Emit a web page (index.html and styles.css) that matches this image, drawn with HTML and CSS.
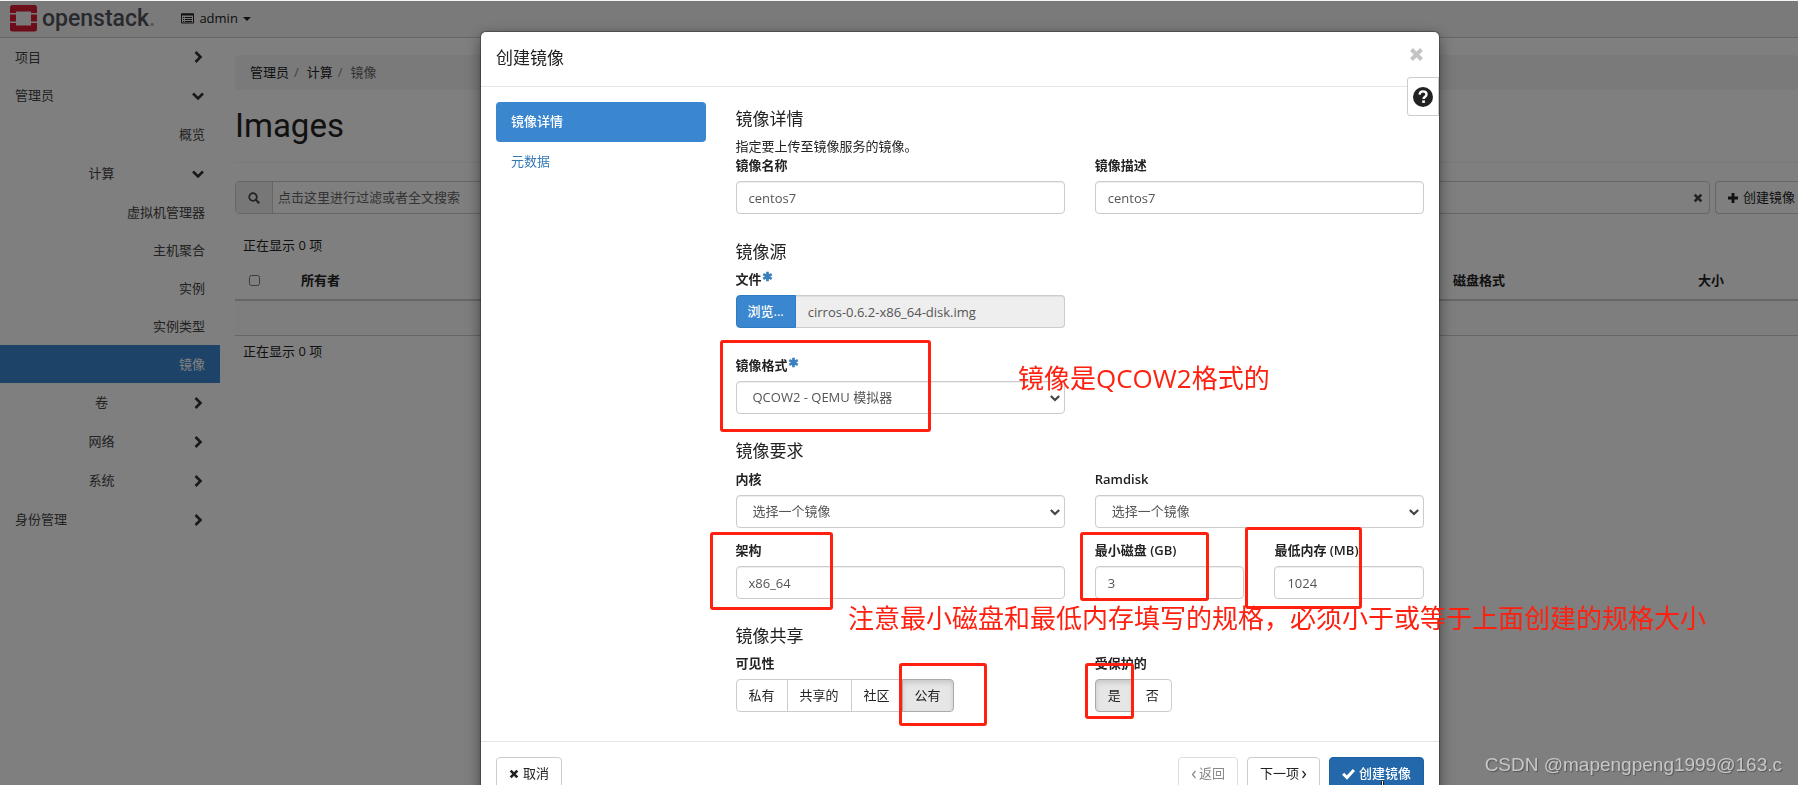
FILE: index.html
```html
<!DOCTYPE html>
<html lang="zh-CN">
<head>
<meta charset="utf-8">
<title>Images - OpenStack Dashboard</title>
<link rel="stylesheet" href="styles.css">
</head>
<body>
<svg class="sprite" aria-hidden="true">
  <symbol id="i-right" viewBox="0 0 12 12"><path d="M3.5 1l5 5-5 5" fill="none" stroke="currentColor" stroke-width="2.6"/></symbol>
  <symbol id="i-down" viewBox="0 0 12 12"><path d="M1 3.5l5 5 5-5" fill="none" stroke="currentColor" stroke-width="2.6"/></symbol>
  <symbol id="i-x" viewBox="0 0 12 12"><path d="M2 2l8 8M10 2l-8 8" fill="none" stroke="currentColor" stroke-width="3.2"/></symbol>
  <symbol id="i-plus" viewBox="0 0 12 12"><path d="M6 1v10M1 6h10" fill="none" stroke="currentColor" stroke-width="2.8"/></symbol>
  <symbol id="i-check" viewBox="0 0 12 12"><path d="M1 6.2l3.6 3.6L11 2.8" fill="none" stroke="currentColor" stroke-width="2.8"/></symbol>
  <symbol id="i-search" viewBox="0 0 12 12"><circle cx="5" cy="5" r="3.8" fill="none" stroke="currentColor" stroke-width="1.7"/><path d="M7.8 7.8l3.4 3.4" stroke="currentColor" stroke-width="2.2"/></symbol>
  <symbol id="i-star" viewBox="0 0 12 12"><path d="M6 .8v10.4M1.4 3.4l9.2 5.2M10.6 3.4L1.4 8.6" fill="none" stroke="currentColor" stroke-width="3"/></symbol>
  <symbol id="i-aleft" viewBox="0 0 6 12"><path d="M4.5 3l-3 3.5 3 3.5" fill="none" stroke="currentColor" stroke-width="1.2"/></symbol>
  <symbol id="i-aright" viewBox="0 0 6 12"><path d="M1.5 3l3 3.5-3 3.5" fill="none" stroke="currentColor" stroke-width="1.2"/></symbol>
</svg>

<div class="page">
  <header class="topbar">
    <a class="brand" href="#">
      <svg width="27" height="27" viewBox="0 0 27 27" aria-hidden="true">
        <path fill="#da1a32" d="M2.500 0h22a2.500 2.500 0 0 1 2.500 2.500V8h-6V6.500H6V8H0V2.500A2.500 2.500 0 0 1 2.500 0zM0 9.500h6v7H0zM21 9.500h6v7h-6zM0 18h6v2.500h15V18h6v6a2.500 2.500 0 0 1-2.500 2.500h-22A2.500 2.500 0 0 1 0 24z"/>
      </svg>
      <span class="brand-name">openstack<span class="brand-dot">.</span></span>
    </a>
    <button class="context" type="button">
      <svg width="13" height="11" viewBox="0 0 13 11" aria-hidden="true"><path d="M.5 1h12v9H.5z" fill="none" stroke="currentColor"/><path d="M0 .5h13v2H0zM2 4h1.200v1H2zM4 4h7v1H4zM2 6h1.200v1H2zM4 6h7v1H4zM2 8h1.200v1H2zM4 8h7v1H4z" fill="currentColor"/></svg>
      admin
      <span class="caret"></span>
    </button>
  </header>

  <div class="shell">
    <nav class="sidebar">
      <a class="group first" href="#">项目<svg class="ico"><use href="#i-right"/></svg></a>
      <a class="group" href="#">管理员<svg class="ico"><use href="#i-down"/></svg></a>
      <a class="group leaf" href="#">概览</a>
      <a class="group sub" href="#"><span>计算</span><svg class="ico"><use href="#i-down"/></svg></a>
      <a class="leaf" href="#">虚拟机管理器</a>
      <a class="leaf" href="#">主机聚合</a>
      <a class="leaf" href="#">实例</a>
      <a class="leaf" href="#">实例类型</a>
      <a class="leaf active" href="#">镜像</a>
      <a class="group sub" href="#"><span>卷</span><svg class="ico"><use href="#i-right"/></svg></a>
      <a class="group sub" href="#"><span>网络</span><svg class="ico"><use href="#i-right"/></svg></a>
      <a class="group sub" href="#"><span>系统</span><svg class="ico"><use href="#i-right"/></svg></a>
      <a class="group" href="#">身份管理<svg class="ico"><use href="#i-right"/></svg></a>
    </nav>

    <main class="main">
      <ol class="breadcrumb">
        <li><a href="#">管理员</a></li>
        <li><a href="#">计算</a></li>
        <li class="current">镜像</li>
      </ol>
      <h1 class="title">Images</h1>
      <div class="toolbar">
        <div class="search">
          <span class="addon"><svg class="ico"><use href="#i-search"/></svg></span>
          <input class="search-input" type="text" aria-label="过滤" placeholder="点击这里进行过滤或者全文搜索">
          <button class="clear" type="button" aria-label="清除"><svg class="ico-s"><use href="#i-x"/></svg></button>
        </div>
        <button class="btn create" type="button"><svg class="ico"><use href="#i-plus"/></svg>创建镜像</button>
      </div>
      <p class="count">正在显示 0 项</p>
      <table class="table">
        <thead>
          <tr><th class="c-check"><input type="checkbox" aria-label="全选"></th><th class="c-owner">所有者</th><th class="c-format">磁盘格式</th><th class="c-size">大小</th></tr>
        </thead>
        <tbody><tr><td colspan="4"></td></tr></tbody>
      </table>
      <p class="count">正在显示 0 项</p>
    </main>
  </div>
</div>

<div class="backdrop">
  <section class="modal" role="dialog" aria-labelledby="dlg-title">
    <header class="modal-head">
      <h2 id="dlg-title" class="modal-title">创建镜像</h2>
      <button class="close" type="button" aria-label="关闭"><svg width="15" height="15"><use href="#i-x"/></svg></button>
    </header>
    <button class="help" type="button" aria-label="帮助">
      <svg width="20" height="20" viewBox="0 0 20 20" aria-hidden="true"><circle cx="10" cy="10" r="10" fill="#222"/><path d="M6.600 7.600C6.800 5.400 8.200 4.400 10 4.400c2 0 3.500 1.200 3.500 3 0 2.300-2.900 2.400-2.900 4.700" fill="none" stroke="#fff" stroke-width="2.400"/><path d="M9.200 13.400h2.700v2.500H9.200z" fill="#fff"/></svg>
    </button>
    <div class="modal-body">
      <nav class="steps">
        <a class="step active" href="#">镜像详情</a>
        <a class="step" href="#">元数据</a>
      </nav>
      <form class="form">
        <h3 class="legend">镜像详情</h3>
        <p class="hint">指定要上传至镜像服务的镜像。</p>
        <div class="row">
          <div class="field"><label for="name">镜像名称</label><input class="control" id="name" type="text" value="centos7"></div>
          <div class="field"><label for="desc">镜像描述</label><input class="control" id="desc" type="text" value="centos7"></div>
        </div>

        <h3 class="legend source">镜像源</h3>
        <div class="row">
          <div class="field">
            <label for="file">文件<svg class="star"><use href="#i-star"/></svg></label>
            <div class="file"><button class="browse" type="button">浏览...</button><input class="control" id="file" type="text" value="cirros-0.6.2-x86_64-disk.img" readonly></div>
          </div>
        </div>
        <div class="row format">
          <div class="field">
            <label for="format">镜像格式<svg class="star"><use href="#i-star"/></svg></label>
            <div class="select"><select class="control" id="format"><option>QCOW2 - QEMU 模拟器</option></select><svg class="ico-s"><use href="#i-down"/></svg></div>
          </div>
        </div>

        <h3 class="legend require">镜像要求</h3>
        <div class="row">
          <div class="field"><label for="kernel">内核</label><div class="select"><select class="control" id="kernel"><option>选择一个镜像</option></select><svg class="ico-s"><use href="#i-down"/></svg></div></div>
          <div class="field"><label for="ramdisk">Ramdisk</label><div class="select"><select class="control" id="ramdisk"><option>选择一个镜像</option></select><svg class="ico-s"><use href="#i-down"/></svg></div></div>
        </div>
        <div class="row next">
          <div class="field"><label for="arch">架构</label><input class="control" id="arch" type="text" value="x86_64"></div>
          <div class="row">
            <div class="field"><label for="disk">最小磁盘 (GB)</label><input class="control" id="disk" type="text" value="3"></div>
            <div class="field"><label for="ram">最低内存 (MB)</label><input class="control" id="ram" type="text" value="1024"></div>
          </div>
        </div>

        <h3 class="legend share">镜像共享</h3>
        <div class="row">
          <div class="field"><span class="label" id="vis">可见性</span>
            <div class="btn-group" role="group" aria-labelledby="vis"><button class="btn" type="button">私有</button><button class="btn" type="button">共享的</button><button class="btn" type="button">社区</button><button class="btn pressed" type="button">公有</button></div>
          </div>
          <div class="field"><span class="label" id="prot">受保护的</span>
            <div class="btn-group" role="group" aria-labelledby="prot"><button class="btn pressed" type="button">是</button><button class="btn" type="button">否</button></div>
          </div>
        </div>
      </form>
    </div>
    <footer class="modal-foot">
      <button class="btn cancel" type="button"><svg class="ico-s"><use href="#i-x"/></svg>取消</button>
      <button class="btn step-btn" type="button" disabled><svg class="angle"><use href="#i-aleft"/></svg>返回</button>
      <button class="btn step-btn" type="button">下一项<svg class="angle"><use href="#i-aright"/></svg></button>
      <button class="btn primary" type="button"><svg class="check"><use href="#i-check"/></svg>创建镜像</button>
    </footer>
  </section>
</div>

<div class="notes">
  <div class="mark mark-format"></div>
  <div class="mark mark-arch"></div>
  <div class="mark mark-disk"></div>
  <div class="mark mark-ram"></div>
  <div class="mark mark-public"></div>
  <div class="mark mark-yes"></div>
  <p class="note note-format">镜像是QCOW2格式的</p>
  <p class="note note-size">注意最小磁盘和最低内存填写的规格，必须小于或等于上面创建的规格大小</p>
  <p class="watermark">CSDN @mapengpeng1999@163.c</p>
  <svg class="pointer" width="8" height="14" viewBox="0 0 8 14" aria-hidden="true"><path d="M2.500 14V1.500a1 1 0 0 1 2 0V14z" fill="#fff" stroke="#111"/></svg>
</div>
</body>
</html>
```
FILE: styles.css
```css
* { box-sizing: border-box; }
body {
  margin: 0;
  height: 100vh;
  overflow: hidden;
  background: #fff;
  color: #222;
  font: 13px/19px "Open Sans", "Noto Sans CJK SC", sans-serif;
}
button, input, select { font: inherit; color: inherit; }
a { color: inherit; text-decoration: none; }
p, h1, h2, h3, ol { margin: 0; padding: 0; font-weight: 400; }
.sprite { display: none; }
.ico { width: 12px; height: 12px; flex: none; }
.ico-s { width: 10px; height: 10px; flex: none; }

/* page */
.topbar {
  display: flex;
  align-items: center;
  height: 38px;
  padding: 0 10px;
  background: #f4f4f6;
  border-bottom: 1px solid #ccc;
}
.brand { display: flex; align-items: center; gap: 5px; }
.brand-name { font: 500 23px/27px Roboto, "Open Sans", sans-serif; color: #50525a; }
.brand-dot { color: #aaa; }
.context {
  display: flex;
  align-items: center;
  gap: 5px;
  margin-left: 20px;
  border: 0;
  background: none;
}
.caret { border: 4px solid transparent; border-top-color: #222; border-bottom: 0; }
.shell { display: flex; }
.sidebar { flex: 0 0 220px; }
.sidebar a { display: flex; align-items: center; justify-content: space-between; height: 39px; padding: 0 15px; color: #444; }
.sidebar .ico { color: #333; }
.sidebar .group { margin-right: 1px; }
.sidebar .first { height: 38px; }
.sidebar .sub span { flex: 1; padding-right: 4px; text-align: center; }
.sidebar .leaf { justify-content: flex-end; margin-right: 0; height: 38px; }
.sidebar .group.leaf { height: 39px; }
.sidebar .active { background: #3b87d0; color: #fff; }
.main { flex: 1; min-width: 0; padding: 17px 0 0 15px; overflow: hidden; }
.breadcrumb {
  display: flex;
  padding: 8px 15px;
  list-style: none;
  background: #f5f5f5;
  border-radius: 4px;
}
.breadcrumb li + li::before { content: "/"; padding: 0 8px 0 5px; color: #888; }
.breadcrumb .current { color: #666; }
.title {
  padding: 16px 0;
  font: 33px/40px Roboto, "Liberation Sans", sans-serif;
  border-bottom: 1px solid #f3f3f3;
}
.toolbar { display: flex; gap: 5px; margin-top: 18px; }
.toolbar .create { padding: 0 3px 0 11px; border-right: 0; border-radius: 4px 0 0 4px; }
.search { display: flex; flex: 1; height: 33px; border: 1px solid #ccc; border-radius: 4px; }
.addon { display: grid; place-items: center; width: 37px; background: #eee; border-right: 1px solid #ccc; color: #444; }
.search-input { flex: 1; min-width: 0; padding: 0 5px; border: 0; background: none; }
.search-input::placeholder { color: #666; }
.clear { display: grid; place-items: center; width: 22px; padding: 0; border: 0; background: none; color: #444; }
.count { padding: 22px 8px 15px; }
.table { width: 100%; border-collapse: collapse; table-layout: fixed; }
.table th { height: 30px; padding: 0 8px 8px; text-align: left; border-bottom: 2px solid #ccc; line-height: 19px; }
.table th.c-check { padding-left: 14px; }
.table input { display: block; margin: 0; width: 11px; height: 11px; }
.table td { height: 35px; border-bottom: 1px solid #ccc; background: #fdfdfd; }
.table + .count { padding-top: 6px; }
.c-check { width: 58px; }
.c-format { width: 245px; }
.c-size { width: 108px; }

/* dialog */
.backdrop {
  position: fixed;
  inset: 1px 0 0;
  display: flex;
  justify-content: center;
  align-items: flex-start;
  padding: 31px 0 0 122px;
  overflow: hidden;
  background: rgba(0, 0, 0, 0.5);
}
.modal {
  position: relative;
  width: 958px;
  background: #fff;
  border-radius: 5px;
  box-shadow: 0 5px 15px rgba(0, 0, 0, 0.5), 0 0 1px 1px rgba(0, 0, 0, 0.3);
}
.modal-head { display: flex; justify-content: space-between; height: 55px; padding: 15px; border-bottom: 1px solid #e5e5e5; }
.modal-title { font-size: 17px; line-height: 22px; }
.close { height: 18px; padding: 0; border: 0; background: none; color: #c4c4c4; }
.help {
  position: absolute;
  top: 45px;
  right: 0;
  display: grid;
  place-items: center;
  width: 32px;
  height: 39px;
  padding: 0;
  border: 1px solid #ccc;
  border-radius: 3px 0 0 3px;
  background: #fff;
}
.modal-body { display: grid; grid-template-columns: 1fr 3fr; padding: 15px 0 29px; }
.steps, .form { padding: 0 15px; min-width: 0; }
.step { display: block; padding: 10px 15px; height: 40px; border-radius: 4px; color: #337ab7; }
.step.active { background: #3a87d0; color: #fff; font-weight: 500; }
.legend { padding-top: 6px; font-size: 17px; line-height: 22px; }
.hint { margin-top: 7px; }
.row { display: grid; grid-template-columns: 1fr 1fr; gap: 30px; }
.field { min-width: 0; }
label, .label { display: block; height: 25px; font-weight: 600; line-height: 19px; }
.control {
  display: block;
  width: 100%;
  height: 33px;
  padding: 0 12px;
  border: 1px solid #ccc;
  border-radius: 4px;
  background: #fff;
  color: #555;
  box-shadow: inset 0 1px 1px rgba(0, 0, 0, 0.07);
}
.star { width: 11px; height: 11px; vertical-align: 2px; color: #3a80bd; }
.source { padding-top: 27px; margin-bottom: 7px; }
.require, .share { padding-top: 26px; margin-bottom: 8px; }
.share { margin-bottom: 7px; }
.file { display: flex; }
.browse { padding: 0 11px; border: 1px solid #2f7cc4; border-radius: 4px 0 0 4px; background: #3a87d0; color: #fff; font-weight: 500; white-space: nowrap; }
.file .control { flex: 1; min-width: 0; border-left: 0; border-radius: 0 4px 4px 0; background: #eee; }
.format { margin-top: 28px; }
.next { margin-top: 13px; }
.select { display: grid; align-items: center; }
.select > * { grid-area: 1 / 1; }
.select select { appearance: none; padding: 0 16px; }
.select svg { justify-self: end; margin-right: 5px; color: #444; }
.btn {
  display: inline-flex;
  align-items: center;
  justify-content: center;
  gap: 4px;
  height: 33px;
  padding: 0 12px;
  border: 1px solid #ccc;
  border-radius: 4px;
  background: #fff;
  white-space: nowrap;
}
.btn-group { display: flex; }
.btn-group .btn + .btn { margin-left: -1px; }
.btn-group .btn:not(:first-child) { border-top-left-radius: 0; border-bottom-left-radius: 0; }
.btn-group .btn:not(:last-child) { border-top-right-radius: 0; border-bottom-right-radius: 0; }
.pressed { border-color: #aaa; background: #e6e6e6; box-shadow: inset 0 3px 5px rgba(0, 0, 0, 0.125); }
.modal-foot { display: flex; gap: 9px; padding: 15px; border-top: 1px solid #e5e5e5; }
.cancel { margin-right: auto; }
.step-btn { gap: 2px; }
.btn:disabled { color: #888; border-color: #ddd; }
.primary { border-color: #1b62a5; background: #2268ab; color: #fff; font-weight: 500; }
.check { width: 13px; height: 13px; }
.angle { width: 6px; height: 12px; }

/* annotations */
.notes { position: fixed; inset: 0; overflow: hidden; pointer-events: none; }
.mark { position: absolute; border: 3px solid #ff2010; border-radius: 3px; }
.mark-format { left: 720px; top: 340px; width: 211px; height: 92px; }
.mark-arch { left: 710px; top: 532px; width: 123px; height: 78px; }
.mark-disk { left: 1080px; top: 532px; width: 129px; height: 69px; }
.mark-ram { left: 1245px; top: 527px; width: 117px; height: 82px; }
.mark-public { left: 899px; top: 663px; width: 88px; height: 63px; }
.mark-yes { left: 1085px; top: 663px; width: 49px; height: 56px; }
.note { position: absolute; color: #ff2010; font-size: 26px; line-height: 34px; white-space: nowrap; }
.note-format { left: 1018px; top: 361px; }
.note-size { left: 848px; top: 601px; }
.watermark { position: absolute; right: 16px; bottom: 7px; color: #c8c8c8; font: 19px/26px "Liberation Sans", sans-serif; text-shadow: 1px 1px 1px #555; }
.pointer { position: absolute; left: 1379px; top: 780px; }
```
